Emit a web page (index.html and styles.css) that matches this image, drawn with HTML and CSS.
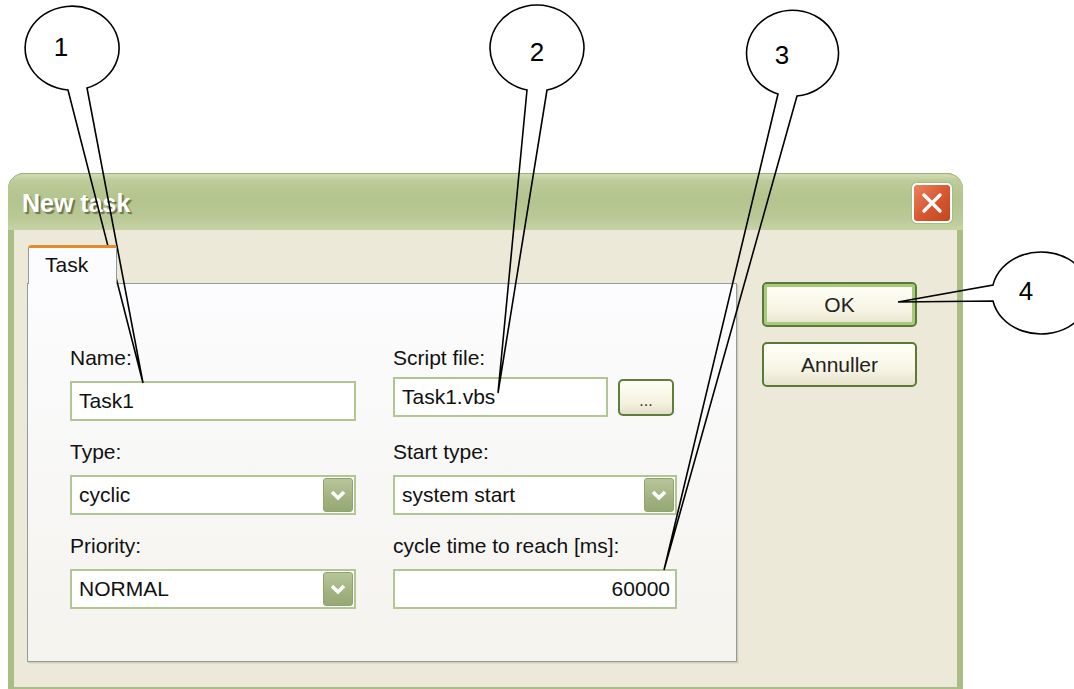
FILE: index.html
```html
<!DOCTYPE html>
<html lang="en">
<head>
    <meta charset="UTF-8">
    <title>New task</title>
    <link rel="stylesheet" href="styles.css">
</head>
<body>
    <div class="window">
        <div class="titlebar">
            <span class="title">New task</span>
            <button class="close-btn" aria-label="Close">
                <svg width="24" height="24" viewBox="0 0 24 24"><path d="M4 4 L20 20 M20 4 L4 20" stroke="#fff" stroke-width="3.4" stroke-linecap="round"/></svg>
            </button>
        </div>

        <div class="client">
            <div class="tabs">
                <div class="tab-strip">
                    <div class="tab active">Task</div>
                </div>
                <div class="tab-panel">
                    <div class="form-grid">
                        <div class="field">
                            <label>Name:</label>
                            <div class="textbox">Task1</div>
                        </div>
                        <div class="field field-file">
                            <label>Script file:</label>
                            <div class="file-row">
                                <div class="textbox">Task1.vbs</div>
                                <button class="browse-btn">...</button>
                            </div>
                        </div>

                        <div class="field">
                            <label>Type:</label>
                            <div class="combo">
                                <span>cyclic</span>
                                <span class="combo-arrow"><svg width="18" height="14" viewBox="0 0 18 14"><path d="M3 4 L9 10 L15 4" fill="none" stroke="#fff" stroke-width="3.6"/></svg></span>
                            </div>
                        </div>
                        <div class="field">
                            <label>Start type:</label>
                            <div class="combo">
                                <span>system start</span>
                                <span class="combo-arrow"><svg width="18" height="14" viewBox="0 0 18 14"><path d="M3 4 L9 10 L15 4" fill="none" stroke="#fff" stroke-width="3.6"/></svg></span>
                            </div>
                        </div>

                        <div class="field">
                            <label>Priority:</label>
                            <div class="combo">
                                <span>NORMAL</span>
                                <span class="combo-arrow"><svg width="18" height="14" viewBox="0 0 18 14"><path d="M3 4 L9 10 L15 4" fill="none" stroke="#fff" stroke-width="3.6"/></svg></span>
                            </div>
                        </div>
                        <div class="field">
                            <label>cycle time to reach [ms]:</label>
                            <div class="textbox number">60000</div>
                        </div>
                    </div>
                </div>
            </div>

            <div class="actions">
                <button class="btn default">OK</button>
                <button class="btn">Annuller</button>
            </div>
        </div>
    </div>

    <!-- numbered callouts drawn over the dialog -->
    <svg class="callouts" width="1074" height="689" viewBox="0 0 1074 689">
        <g fill="none" stroke="#000" stroke-width="1.6" stroke-linejoin="miter">
            <path d="M68 90 A47 42 0 1 1 87 88 L143 383 Z"/>
            <path d="M527 90 A47 43 0 1 1 547 90 L498 393 Z"/>
            <path d="M778 94 A46 43 0 1 1 797 96 L664 570 Z"/>
            <path d="M993 285 A49 41 0 1 1 993 301 L898 302 Z"/>
        </g>
        <g class="callout-num">
            <text x="61" y="56">1</text>
            <text x="537" y="61">2</text>
            <text x="782" y="64">3</text>
            <text x="1026" y="300">4</text>
        </g>
    </svg>
</body>
</html>
```

FILE: styles.css
```css
body {
    margin: 0;
    background: #fff;
    font-family: "Liberation Sans", Arial, sans-serif;
    font-size: 21px;
    color: #111;
    overflow: hidden;
    height: 689px;
    position: relative;
}
.window {
    margin: 173px 0 0 8px;
    width: 955px;
    height: 520px;
    box-sizing: border-box;
    display: flex;
    flex-direction: column;
    border: 6px solid #a9bd85;
    border-top: 0;
    border-radius: 16px 16px 0 0;
    box-shadow: inset 1px 0 0 #8fa56b, inset -2px 0 0 #7f955c;
    background: #a9bd85;
}
.titlebar {
    height: 57px;
    margin: 0 -6px;
    display: flex;
    align-items: center;
    justify-content: space-between;
    padding: 2px 11px 0 14px;
    box-sizing: border-box;
    border-radius: 16px 16px 0 0;
    border-top: 1px solid #9bb07a;
    background: linear-gradient(#d2ddb3 0%, #bccb99 12%, #b3c48e 45%, #bac996 80%, #c7d3a6 100%);
}
.title {
    font-weight: bold;
    font-size: 25px;
    color: #fff;
    text-shadow: 2px 2px 1px rgba(70, 84, 48, 0.7);
}
.close-btn {
    width: 40px;
    height: 40px;
    padding: 0;
    display: flex;
    align-items: center;
    justify-content: center;
    border: 2px solid #fff;
    border-radius: 5px;
    background: linear-gradient(135deg, #e9825e 0%, #d5562f 55%, #c4461f 100%);
    box-shadow: 0 0 0 1px #a9b98a;
}
.client {
    flex: 1;
    display: flex;
    background: #ece9d8;
    padding: 15px 0 0 13px;
}
.tab-strip {
    display: flex;
    padding-left: 1px;
    height: 38px;
}
.tab {
    width: 89px;
    box-sizing: border-box;
    padding: 5px 0 0 16px;
    border: 1px solid #919b9c;
    border-top: 3px solid #e68b2c;
    border-bottom: 0;
    border-radius: 3px 3px 0 0;
    background: #fcfcfe;
    position: relative;
    z-index: 1;
    height: 39px;
}
.tab-panel {
    width: 710px;
    height: 379px;
    box-sizing: border-box;
    border: 1px solid #919b9c;
    box-shadow: 1px 1px 0 #d0cec0, 2px 2px 0 #e0ddcc;
    background: linear-gradient(#fcfcfe, #f4f3ee);
    padding: 62px 0 0 42px;
}
.form-grid {
    display: grid;
    grid-template-columns: 286px 284px;
    column-gap: 37px;
    row-gap: 19px;
}
.field label {
    display: block;
    line-height: 24px;
    margin-bottom: 11px;
}
.textbox,
.combo {
    height: 40px;
    box-sizing: border-box;
    border: 2px solid #b1c595;
    background: #fff;
    padding: 0 7px;
    display: flex;
    align-items: center;
}
.textbox.number {
    justify-content: flex-end;
    padding-right: 5px;
}
.combo {
    justify-content: space-between;
    padding-right: 1px;
}
.combo-arrow {
    width: 30px;
    height: 34px;
    box-sizing: border-box;
    display: flex;
    align-items: center;
    justify-content: center;
    border: 1px solid #8fa26f;
    border-radius: 3px;
    background: linear-gradient(#b7c69b, #a1b27f 60%, #96a873);
}
.field-file .file-row {
    display: flex;
    align-items: center;
    gap: 10px;
    margin-top: -4px;
}
.field-file .textbox {
    width: 215px;
}
.browse-btn {
    width: 56px;
    height: 37px;
    padding: 8px 0 0;
    font-family: inherit;
    font-size: 16px;
    color: #333;
    border: 2px solid #5f7d3d;
    border-radius: 5px;
    background: linear-gradient(#fffff8, #f3f1de 70%, #e2dfc6);
}
.actions {
    display: flex;
    flex-direction: column;
    gap: 15px;
    margin: 37px 0 0 25px;
}
.btn {
    width: 155px;
    height: 45px;
    font-family: inherit;
    font-size: 21px;
    color: #222;
    border: 2px solid #5b7a38;
    border-radius: 5px;
    background: linear-gradient(#fffff7, #f7f5e6 60%, #e6e3cc);
}
.btn.default {
    box-shadow: inset 0 0 0 3px #a7ca7c;
}
.callouts {
    position: absolute;
    top: 0;
    left: 0;
    pointer-events: none;
}
.callout-num text {
    font-family: "Liberation Sans", Arial, sans-serif;
    font-size: 26px;
    text-anchor: middle;
    fill: #000;
}
```
